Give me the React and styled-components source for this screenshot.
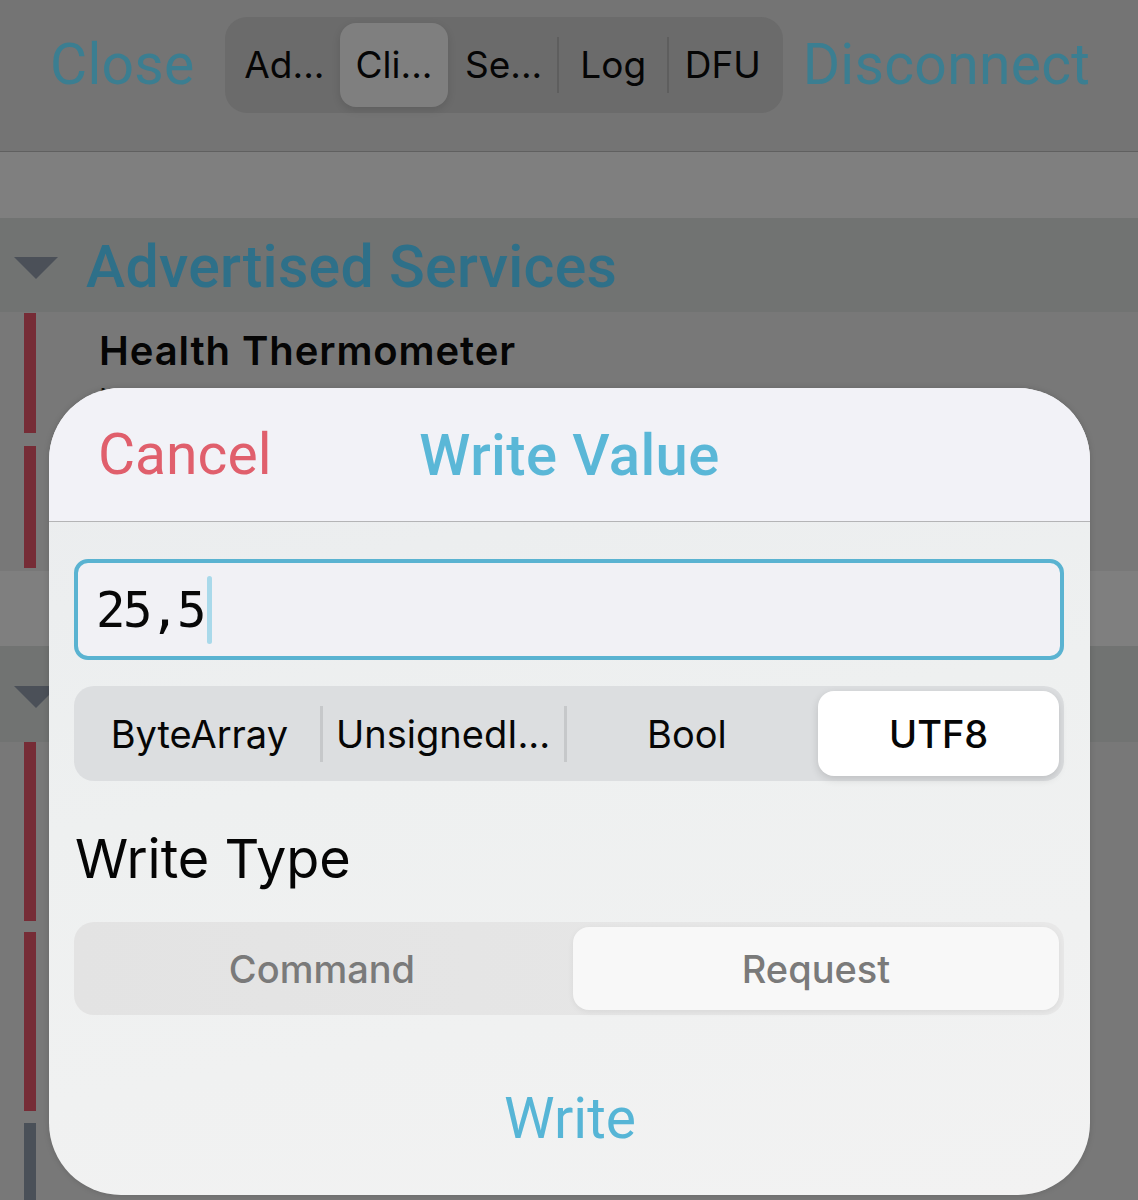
import React from "react";
import styled, { createGlobalStyle } from "styled-components";

const GlobalStyle = createGlobalStyle`
	html, body {
		margin: 0;
		padding: 0;
		background: #777777;
	}
	* {
		box-sizing: border-box;
	}
`;

const navTabs = ["Ad...", "Cli...", "Se...", "Log", "DFU"];
const formats = ["ByteArray", "UnsignedI...", "Bool", "UTF8"];
const writeTypes = ["Command", "Request"];

export default function App() {
	return (
		<Screen>
			<GlobalStyle />
			<NavBar>
				<NavButton>Close</NavButton>
				<NavSegments>
					{navTabs.map((t, i) => (
						<React.Fragment key={t}>
							{i > 0 && <NavDivider visible={i === 3 || i === 4} />}
							<NavSegment selected={i === 1}>{t}</NavSegment>
						</React.Fragment>
					))}
				</NavSegments>
				<NavButton>Disconnect</NavButton>
			</NavBar>
			<Spacer height={66} />
			<SectionHeader>
				<Triangle />
				<SectionTitle>Advertised Services</SectionTitle>
			</SectionHeader>
			<ServiceRow height={127}>
				<Bar top={1} bottom={6} />
				<RowText>
					<ServiceName>Health Thermometer</ServiceName>
					<ServiceUuid>UUID: 0x1809</ServiceUuid>
				</RowText>
			</ServiceRow>
			<ServiceRow height={132}>
				<Bar top={7} bottom={3} />
			</ServiceRow>
			<Spacer height={75} />
			<SectionHeader height={96}>
				<Triangle />
			</SectionHeader>
			<ServiceRow height={184}>
				<Bar top={0} bottom={5} />
			</ServiceRow>
			<ServiceRow height={191}>
				<Bar top={6} bottom={6} />
			</ServiceRow>
			<ServiceRow height={90}>
				<Bar top={6} bottom={0} dark />
			</ServiceRow>

			<Sheet>
				<SheetHeader>
					<CancelButton>Cancel</CancelButton>
					<SheetTitle>Write Value</SheetTitle>
					<span />
				</SheetHeader>
				<SheetBody>
					<ValueField>
						<ValueText>25,5</ValueText>
						<Caret />
					</ValueField>
					<FormatControl>
						{formats.map((f, i) => (
							<React.Fragment key={f}>
								{i > 0 && <FormatDivider visible={i === 1 || i === 2} />}
								<FormatSegment selected={i === 3}>{f}</FormatSegment>
							</React.Fragment>
						))}
					</FormatControl>
					<Label>Write Type</Label>
					<TypeControl>
						{writeTypes.map((w, i) => (
							<TypeSegment key={w} selected={i === 1}>
								{w}
							</TypeSegment>
						))}
					</TypeControl>
					<WriteButton>Write</WriteButton>
				</SheetBody>
			</Sheet>
		</Screen>
	);
}

const Screen = styled.div`
	position: relative;
	width: 1138px;
	height: 1200px;
	overflow: hidden;
	background: #787878;
	font-family: Inter, "Noto Sans", sans-serif;
`;

const NavBar = styled.div`
	height: 152px;
	background: #747474;
	border-bottom: 1px solid #606060;
	display: flex;
	align-items: center;
	padding: 0 0 22px 50px;
`;

const NavButton = styled.div`
	font-family: Roboto, sans-serif;
	font-size: 57px;
	color: #3b7e91;
	letter-spacing: 0.3px;
`;

const NavSegments = styled.div`
	display: flex;
	align-items: center;
	width: 558px;
	height: 96px;
	margin: 0 20px 0 30px;
	padding: 6px;
	border-radius: 22px;
	background: #6b6b6b;
`;

const NavSegment = styled.div`
	flex: 1;
	height: 84px;
	display: flex;
	align-items: center;
	justify-content: center;
	font-size: 37px;
	color: #050505;
	border-radius: 16px;
	background: ${(p) => (p.selected ? "#7f7f7f" : "transparent")};
	box-shadow: ${(p) => (p.selected ? "0 3px 8px rgba(0,0,0,0.12)" : "none")};
`;

const NavDivider = styled.div`
	width: 2px;
	height: 56px;
	background: ${(p) => (p.visible ? "#5e5e5e" : "transparent")};
`;

const Spacer = styled.div`
	height: ${(p) => p.height}px;
	background: #7f7f7f;
`;

const SectionHeader = styled.div`
	height: ${(p) => p.height || 94}px;
	background: #717372;
	display: flex;
	align-items: center;
	padding-left: 14px;
	gap: 28px;
`;

const Triangle = styled.div`
	width: 0;
	height: 0;
	border-left: 22px solid transparent;
	border-right: 22px solid transparent;
	border-top: 22px solid #4b5058;
	margin-top: 6px;
`;

const SectionTitle = styled.div`
	font-family: Roboto, sans-serif;
	font-weight: 500;
	font-size: 59px;
	color: #2e7089;
	margin-top: 2px;
	letter-spacing: 0.3px;
`;

const ServiceRow = styled.div`
	height: ${(p) => p.height}px;
	background: #787878;
	display: flex;
	padding-left: 24px;
`;

const Bar = styled.div`
	width: 12px;
	margin-top: ${(p) => p.top}px;
	margin-bottom: ${(p) => p.bottom}px;
	background: ${(p) => (p.dark ? "#4a5058" : "#762c36")};
`;

const RowText = styled.div`
	padding: 14px 0 0 63px;
	display: flex;
	flex-direction: column;
	gap: 6px;
`;

const ServiceName = styled.div`
	font-size: 40px;
	font-weight: 600;
	letter-spacing: 0.9px;
	color: #050505;
`;

const ServiceUuid = styled.div`
	font-size: 30px;
	color: #111;
`;

const Sheet = styled.div`
	position: absolute;
	left: 49px;
	top: 388px;
	width: 1041px;
	height: 807px;
	border-radius: 72px;
	overflow: hidden;
	background: linear-gradient(170deg, #eaecee 0%, #eef0f0 45%, #f2f2f2 100%);
	box-shadow: 0 0 6px rgba(0, 0, 0, 0.15);
`;

const SheetHeader = styled.div`
	height: 134px;
	background: #f2f2f7;
	border-bottom: 1px solid #b4b4b6;
	display: grid;
	grid-template-columns: 1fr auto 1fr;
	align-items: center;
	padding: 0 49px;
`;

const CancelButton = styled.div`
	font-family: Roboto, sans-serif;
	font-size: 57px;
	color: #e05f6c;
`;

const SheetTitle = styled.div`
	font-family: Roboto, sans-serif;
	font-weight: 500;
	font-size: 58px;
	letter-spacing: 0.4px;
	color: #5ab7d7;
`;

const SheetBody = styled.div`
	padding: 37px 26px 0 25px;
	display: flex;
	flex-direction: column;
`;

const ValueField = styled.div`
	height: 101px;
	border: 4px solid #5ab3d1;
	border-radius: 14px;
	background: #f1f1f5;
	display: flex;
	align-items: center;
	padding-left: 18px;
`;

const ValueText = styled.div`
	font-family: "DejaVu Sans Mono", "Liberation Mono", monospace;
	font-size: 49px;
	letter-spacing: -2.5px;
	color: #080808;
	margin-top: 2px;
`;

const Caret = styled.div`
	width: 5px;
	height: 68px;
	border-radius: 3px;
	background: #a9d9ea;
	margin-left: 3px;
`;

const FormatControl = styled.div`
	margin-top: 26px;
	height: 95px;
	border-radius: 20px;
	background: #dcdee0;
	display: flex;
	align-items: center;
	padding: 5px;
`;

const FormatSegment = styled.div`
	flex: 1;
	height: 85px;
	display: flex;
	align-items: center;
	justify-content: center;
	font-size: 38px;
	font-weight: ${(p) => (p.selected ? 500 : 400)};
	color: #060606;
	border-radius: 16px;
	background: ${(p) => (p.selected ? "#ffffff" : "transparent")};
	box-shadow: ${(p) => (p.selected ? "0 3px 8px rgba(0,0,0,0.14)" : "none")};
	${(p) => p.selected && "margin-left: 8px;"}
`;

const FormatDivider = styled.div`
	width: 3px;
	height: 56px;
	background: ${(p) => (p.visible ? "#c6c8ca" : "transparent")};
`;

const Label = styled.div`
	margin-top: 47px;
	font-size: 54px;
	line-height: 62px;
	color: #050505;
	padding-left: 1px;
`;

const TypeControl = styled.div`
	margin-top: 32px;
	height: 93px;
	border-radius: 20px;
	background: linear-gradient(90deg, #e3e3e3, #e8e8e8);
	display: flex;
	padding: 5px;
`;

const TypeSegment = styled.div`
	flex: 1;
	display: flex;
	align-items: center;
	justify-content: center;
	font-size: 38px;
	font-weight: 500;
	color: #7a7a7a;
	border-radius: 16px;
	background: ${(p) => (p.selected ? "#f8f8f8" : "transparent")};
	box-shadow: ${(p) => (p.selected ? "0 2px 6px rgba(0,0,0,0.06)" : "none")};
	${(p) => p.selected && "margin-left: 8px;"}
`;

const WriteButton = styled.div`
	margin-top: 70px;
	align-self: center;
	font-family: Roboto, sans-serif;
	font-size: 57px;
	color: #56b5d6;
	margin-left: 2px;
`;
